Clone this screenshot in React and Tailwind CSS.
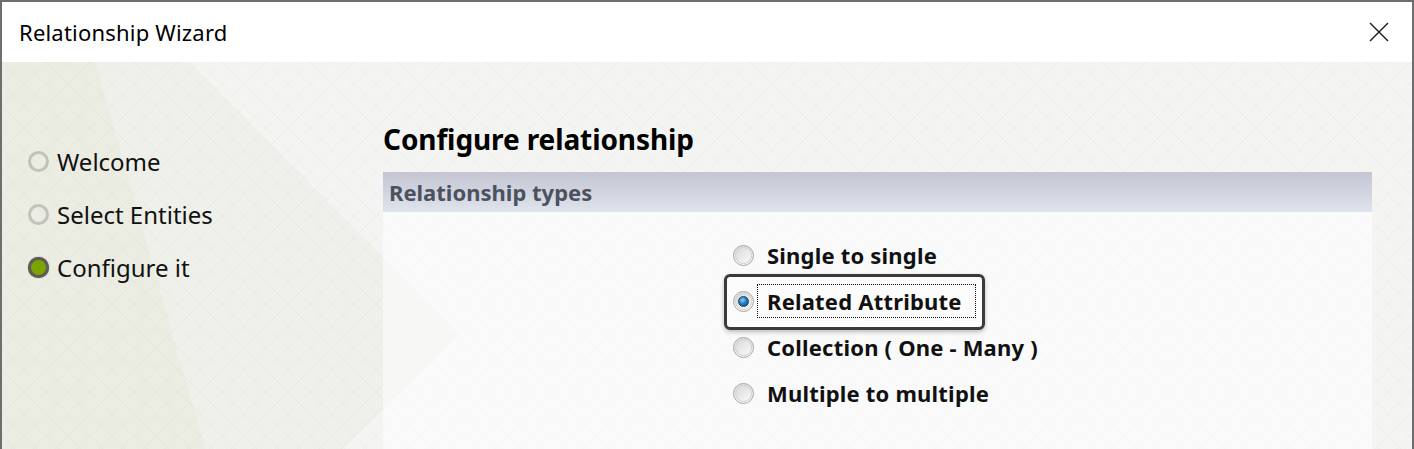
import React from 'react';

const steps = [
  { label: 'Welcome', state: 'done' },
  { label: 'Select Entities', state: 'done' },
  { label: 'Configure it', state: 'current' },
];

const options = [
  { label: 'Single to single' },
  { label: 'Related Attribute', selected: true },
  { label: 'Collection ( One - Many )' },
  { label: 'Multiple to multiple' },
];

function Backdrop() {
  return (
    <svg className="absolute inset-0 w-full h-full" viewBox="0 0 1410 387" preserveAspectRatio="none">
      <defs>
        <pattern id="diamonds" width="22" height="22" patternUnits="userSpaceOnUse">
          <path d="M0 0 L22 22 M22 0 L0 22" stroke="#000" strokeOpacity="0.025" strokeWidth="1" />
        </pattern>
      </defs>
      <rect width="1410" height="387" fill="#f4f4f3" />
      <polygon points="0,0 188,0 458,273 341,387 0,387" fill="#eef0e9" />
      <polygon points="0,0 93,0 203,387 0,387" fill="#ebece2" />
      <rect width="1410" height="387" fill="url(#diamonds)" />
    </svg>
  );
}

function StepDot({ state }) {
  if (state === 'current') {
    return (
      <span className="w-[21px] h-[21px] shrink-0 rounded-full border-[3px] border-[#5d5d55] bg-[#7ba400] shadow-[0_0_1px_#444]" />
    );
  }
  return <span className="w-[21px] h-[21px] shrink-0 rounded-full border-[3px] border-[#c2c2bc]" />;
}

function Radio({ selected }) {
  return (
    <span className="w-[21px] h-[21px] rounded-full border border-[#a5a5a5] bg-gradient-to-b from-[#e2e2e2] to-[#f8f8f8] flex items-center justify-center shrink-0">
      <span className="w-[17px] h-[17px] rounded-full border border-[#cfcfcf] bg-gradient-to-br from-[#d8d8d8] to-[#fbfbfb] flex items-center justify-center">
        {selected && (
          <span className="w-[11px] h-[11px] rounded-full border border-[#2a3a4a] bg-[radial-gradient(circle_at_40%_35%,#8fd0f5_0%,#1f80c6_45%,#0b3f73_100%)]" />
        )}
      </span>
    </span>
  );
}

export default function App() {
  return (
    <div
      className="w-[1414px] h-[449px] overflow-hidden border-t-2 border-x-2 border-[#6e6e6e] bg-white flex flex-col"
      style={{ fontFamily: '"Noto Sans", "Open Sans", sans-serif' }}
    >
      {/* title bar */}
      <div className="h-[60px] shrink-0 flex items-center justify-between pl-[17px] pr-[23px] bg-white">
        <span className="text-[22px] text-black tracking-[0.2px]">Relationship Wizard</span>
        <svg width="20" height="20" viewBox="0 0 20 20">
          <path d="M1 1 L19 19 M19 1 L1 19" stroke="#1a1a1a" strokeWidth="1.4" />
        </svg>
      </div>

      <div className="relative flex-1 flex">
        <Backdrop />

        {/* steps */}
        <div className="relative w-[381px] shrink-0 pl-[26px] pt-[85px] flex flex-col gap-[24px]">
          {steps.map((s) => (
            <div key={s.label} className="flex items-center gap-[8px] h-[29px]">
              <StepDot state={s.state} />
              <span className="text-[24px] leading-[29px] text-[#111]">{s.label}</span>
            </div>
          ))}
        </div>

        {/* page */}
        <div className="relative flex-1 pr-[40px] pt-[60px] flex flex-col">
          <h1 className="text-[28px] leading-[34px] font-bold text-black tracking-[-0.1px]">Configure relationship</h1>
          <div className="mt-[16px] h-[40px] flex items-center px-[6px] bg-gradient-to-b from-[#c3c6d2] to-[#dfe3ec]">
            <span className="text-[22px] font-bold text-[#4c5160]">Relationship types</span>
          </div>
          <div className="flex-1 bg-white/55 pl-[350px] pt-[20px] flex flex-col">
            {options.map((o) => (
              <div key={o.label} className="h-[46px] flex items-center">
                <div className="relative flex items-center gap-[3px]">
                  {o.selected && (
                    <span className="absolute -left-[9px] -right-[9px] -top-[10px] -bottom-[12px] rounded-[6px] border-[3px] border-[#3a3a3a] bg-white/40 shadow-[0_2px_4px_rgba(0,0,0,0.25)]" />
                  )}
                  <span className="relative"><Radio selected={o.selected} /></span>
                  <span
                    className={`relative text-[22px] leading-[32px] font-bold text-[#111] pl-[9px] pr-[13px] tracking-[0.2px] border border-dotted ${
                      o.selected ? 'border-[#111]' : 'border-transparent'
                    }`}
                  >
                    {o.label}
                  </span>
                </div>
              </div>
            ))}
          </div>
        </div>
      </div>
    </div>
  );
}
